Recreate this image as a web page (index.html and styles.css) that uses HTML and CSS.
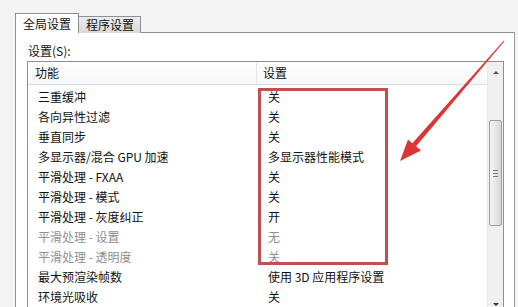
FILE: index.html
```html
<!DOCTYPE html>
<html lang="zh-CN">
<head>
<meta charset="utf-8">
<link rel="stylesheet" href="styles.css">
</head>
<body>
<div class="window">
  <div class="tabs">
    <div class="tab active">全局设置</div>
    <div class="tab">程序设置</div>
  </div>
  <div class="panel">
    <div class="label">设置(S):</div>
    <div class="listbox">
      <div class="list">
        <div class="head">
          <div class="col1">功能</div>
          <div class="col2">设置</div>
        </div>
        <div class="rows">
          <div class="row"><div class="c1">三重缓冲</div><div class="c2">关</div></div>
          <div class="row"><div class="c1">各向异性过滤</div><div class="c2">关</div></div>
          <div class="row"><div class="c1">垂直同步</div><div class="c2">关</div></div>
          <div class="row"><div class="c1">多显示器/混合 GPU 加速</div><div class="c2">多显示器性能模式</div></div>
          <div class="row"><div class="c1">平滑处理 - FXAA</div><div class="c2">关</div></div>
          <div class="row"><div class="c1">平滑处理 - 模式</div><div class="c2">关</div></div>
          <div class="row"><div class="c1">平滑处理 - 灰度纠正</div><div class="c2">开</div></div>
          <div class="row off"><div class="c1">平滑处理 - 设置</div><div class="c2">无</div></div>
          <div class="row off"><div class="c1">平滑处理 - 透明度</div><div class="c2">关</div></div>
          <div class="row"><div class="c1">最大预渲染帧数</div><div class="c2">使用 3D 应用程序设置</div></div>
          <div class="row"><div class="c1">环境光吸收</div><div class="c2">关</div></div>
        </div>
      </div>
      <div class="scrollbar">
        <div class="arrow up"></div>
        <div class="track">
          <div class="thumb"><span class="grip"></span></div>
        </div>
        <div class="arrow down"></div>
      </div>
    </div>
  </div>
</div>
<div class="highlight"></div>
<svg class="pointer" width="518" height="307" viewBox="0 0 518 307">
  <polygon fill="#dd3434" points="504.4,41.3 503.6,40.7 412.1,143.4 415.9,146.6"/>
  <polygon fill="#dd3434" points="400,161 408,139.5 421,150.5"/>
</svg>
</body>
</html>
```
FILE: styles.css
```css
html, body {
  margin: 0;
  padding: 0;
  overflow: hidden;
}
body {
  width: 518px;
  height: 307px;
  background: #f3f3f3;
  font-family: "Noto Sans CJK SC", "DejaVu Sans", sans-serif;
  font-size: 12px;
  color: #111;
  position: relative;
}
.window {
  padding: 13px 0 0 15px;
}
.tabs {
  display: flex;
  align-items: flex-end;
  height: 20px;
  margin-bottom: -1px;
  position: relative;
  z-index: 1;
}
.tab {
  height: 16px;
  line-height: 16px;
  padding: 0 6px 0 7px;
  border: 1px solid #8d9099;
  border-bottom: none;
  background: linear-gradient(#ececec, #dadada);
  color: #111;
  margin-left: -1px;
}
.tab.active {
  height: 19px;
  line-height: 19px;
  margin-left: 0;
  background: #fff;
  padding: 0 7px 0 7px;
  width: 48px;
}
.panel {
  background: #fff;
  border: 1px solid #8d9099;
  border-bottom: none;
  border-right-color: #9a9a9a;
  width: 500px;
  height: 275px;
  overflow: hidden;
  padding: 0 0 0 11px;
  box-sizing: border-box;
}
.label {
  height: 16px;
  line-height: 16px;
  margin-top: 10px;
  margin-bottom: 2px;
  padding-left: 1px;
}
.listbox {
  display: flex;
  width: 477px;
  height: 250px;
  border: 1px solid #8c8f96;
  box-sizing: border-box;
}
.list {
  flex: 1;
  overflow: hidden;
}
.head {
  display: flex;
  height: 22px;
  line-height: 22px;
  border-bottom: 1px solid #dcdcdc;
  background: linear-gradient(#ffffff, #f6f7f9);
}
.col1 {
  width: 221px;
  padding-left: 7px;
  border-right: 1px solid #e6e6e6;
}
.col2 {
  padding-left: 6px;
}
.rows {
  padding-top: 2px;
}
.row {
  display: flex;
  height: 20px;
  line-height: 20px;
}
.c1 {
  width: 219px;
  padding-left: 10px;
}
.c2 {
  padding-left: 11px;
}
.row.off {
  color: #8f8f8f;
}
.scrollbar {
  width: 15px;
  display: flex;
  flex-direction: column;
  background: #f0f0f0;
  border-left: 1px solid #e8e8e8;
}
.arrow {
  height: 17px;
  position: relative;
}
.arrow::after {
  content: "";
  position: absolute;
  left: 5px;
  width: 0;
  height: 0;
  border-left: 3px solid transparent;
  border-right: 3px solid transparent;
}
.arrow.up::after {
  top: 9px;
  border-bottom: 3px solid #555;
}
.arrow.down::after {
  top: 10px;
  border-top: 3px solid #333;
}
.track {
  flex: 1;
  padding-top: 41px;
}
.thumb {
  height: 106px;
  margin: 0 1px;
  border: 1px solid #9e9e9e;
  border-radius: 2px;
  background: linear-gradient(90deg, #f4f4f4, #e4e4e4 60%, #d6d6d6);
  box-sizing: border-box;
  display: flex;
  align-items: center;
  justify-content: center;
}
.grip {
  width: 5px;
  height: 5px;
  border-top: 1px solid #777;
  border-bottom: 1px solid #777;
  position: relative;
}
.grip::after {
  content: "";
  position: absolute;
  left: 0;
  right: 0;
  top: 2px;
  border-top: 1px solid #777;
}
.highlight {
  position: absolute;
  left: 258px;
  top: 88px;
  width: 130px;
  height: 177px;
  border: 3px solid #c0504f;
  box-sizing: border-box;
}
.pointer {
  position: absolute;
  left: 0;
  top: 0;
  pointer-events: none;
}
```
